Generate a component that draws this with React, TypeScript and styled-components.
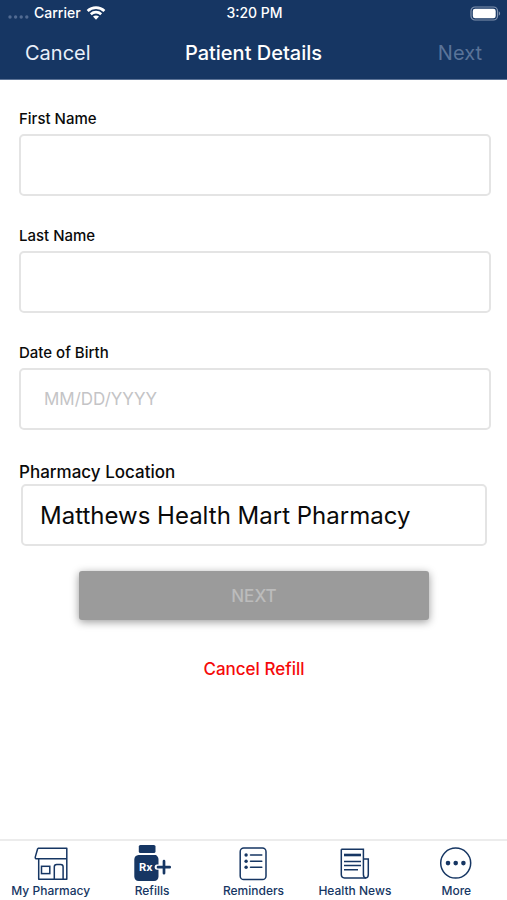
import React from "react";
import styled, { createGlobalStyle } from "styled-components";

const navy = "#163663";

const GlobalStyle = createGlobalStyle`
  *, *::before, *::after { box-sizing: border-box; }
  body {
    margin: 0;
    background: #fff;
    color: #0a0a0a;
    font-family: Inter, "Liberation Sans", sans-serif;
  }
  button, input { font-family: inherit; }
`;

const Screen = styled.div`
  display: flex;
  flex-direction: column;
  min-height: 100vh;
`;

const Header = styled.header`
  background: ${navy};
  color: #fff;
  border-bottom: 1px solid #5c7396;
`;

const StatusBar = styled.div`
  display: grid;
  grid-template-columns: 1fr auto 1fr;
  align-items: center;
  height: 26px;
  padding: 0 6px 0 8px;
  font-size: 14px;
  line-height: 20px;
  font-weight: 500;
`;

const Carrier = styled.div`
  display: flex;
  align-items: center;
  gap: 5px;
`;

const BatterySlot = styled.div`
  display: flex;
  justify-content: flex-end;
`;

const NavBar = styled.nav`
  display: grid;
  grid-template-columns: 1fr auto 1fr;
  align-items: center;
  height: 53px;
  padding: 0 25px;
`;

const Title = styled.h1`
  margin: 0;
  font-size: 20px;
  line-height: 24px;
  font-weight: 500;
`;

const NavButton = styled.button<{ $end?: boolean }>`
  justify-self: ${(p) => (p.$end ? "end" : "start")};
  padding: 0;
  border: 0;
  background: none;
  color: #e9f0fa;
  font-size: 20px;
  line-height: 24px;
  &:disabled { color: #5a7398; }
`;

const Form = styled.form`
  flex: 1;
  display: flex;
  flex-direction: column;
  padding: 29px 16px 24px 19px;
`;

const Field = styled.div`
  display: flex;
  flex-direction: column;
  gap: 5px;
  margin-bottom: 30px;
`;

const LocationField = styled(Field)`
  gap: 2px;
  margin: 2px 0 25px;
`;

const Label = styled.label<{ $large?: boolean }>`
  font-size: ${(p) => (p.$large ? 17 : 15)}px;
  line-height: 20px;
  font-weight: 500;
`;

const TextInput = styled.input`
  width: 100%;
  height: 62px;
  padding: 0 23px;
  border: 2px solid #e4e4e4;
  border-radius: 5px;
  background: #fff;
  color: #0a0a0a;
  font-size: 17px;
  &::placeholder { color: #c4c4c6; opacity: 1; }
`;

const LocationFrame = styled.div`
  display: flex;
  padding: 0 4px 0 2px;
`;

const LocationInput = styled(TextInput)`
  padding: 0 17px;
  font-size: 24px;
`;

const Actions = styled.div`
  display: flex;
  flex-direction: column;
  align-items: center;
  gap: 37px;
  padding: 0 62px 0 60px;
`;

const SubmitButton = styled.button`
  width: 100%;
  height: 49px;
  border: 0;
  border-radius: 3px;
  background: #9b9b9b;
  box-shadow: 0 2px 8px rgba(0, 0, 0, 0.4);
  color: #bcbcbc;
  font-size: 17px;
  font-weight: 500;
`;

const CancelRefill = styled.button`
  padding: 0;
  border: 0;
  background: none;
  color: #f50a0a;
  font-size: 17px;
  line-height: 24px;
  font-weight: 500;
`;

const TabBar = styled.nav`
  display: grid;
  grid-template-columns: repeat(5, 1fr);
  height: 61px;
  border-top: 2px solid #ececec;
`;

const Tab = styled.a`
  display: flex;
  flex-direction: column;
  align-items: center;
  padding-top: 5px;
  color: ${navy};
  font-size: 12px;
  line-height: 14px;
  font-weight: 500;
  text-decoration: none;
  white-space: nowrap;
`;

const TabIcon = styled.svg`
  display: block;
  width: 40px;
  height: 38px;
  overflow: visible;
  fill: none;
  stroke: currentColor;
  stroke-width: 1.5;
`;

const RxText = styled.text`
  fill: #fff;
  stroke: none;
  font-size: 11px;
  font-weight: 700;
`;

const SignalIcon = () => (
  <svg width="21" height="14" viewBox="0 0 21 14" fill="#526b92" aria-hidden="true">
    {[2, 7.6, 13.2, 18.8].map((x) => (
      <circle key={x} cx={x} cy="11" r="1.7" />
    ))}
  </svg>
);

const WifiIcon = () => (
  <svg width="20" height="16" viewBox="0 0 20 16" fill="none" stroke="#fff" strokeWidth="2.7" aria-hidden="true">
    <path d="M1.6 5.9C6.3 1.4 13.7 1.4 18.4 5.9" />
    <path d="M4.8 9.2C7.8 6.5 12.2 6.5 15.2 9.2" />
    <path d="M10 14.7 7 11.5C8.7 10 11.3 10 13 11.5Z" fill="#fff" stroke="none" />
  </svg>
);

const BatteryIcon = () => (
  <svg width="31" height="15" viewBox="0 0 31 15" aria-hidden="true">
    <rect x="1" y="1" width="26.5" height="13" rx="4" fill="none" stroke="#8294b0" strokeWidth="1.2" />
    <rect x="2.8" y="2.8" width="22.9" height="9.4" rx="2.3" fill="#fff" />
    <path d="M28.8 5.3c1.8.8 1.8 3.6 0 4.4z" fill="#8294b0" />
  </svg>
);

const PharmacyIcon = () => (
  <TabIcon viewBox="0 0 40 38" aria-hidden="true">
    <path d="M6.8 2.3H35.8V33.3H32.1V20.8c0-1.5-.9-2.4-2.4-2.4h-4c-1.5 0-2.4.9-2.4 2.4V33.3H7.7V12.8" strokeLinejoin="round" />
    <path d="M6.8 2.3 4.3 10.9c-.3 1 .2 1.9 1.4 1.9H35.8M23.3 33.3H32.1" strokeLinejoin="round" />
    <rect x="10.5" y="20.3" width="8.3" height="7.3" />
  </TabIcon>
);

const RefillsIcon = () => (
  <TabIcon viewBox="0 0 40 38" aria-hidden="true">
    <rect x="6.8" y="-1" width="16.7" height="8" rx="1.6" fill="currentColor" stroke="none" />
    <path
      d="M6.5 9H23.8c1.7 1 2.7 2.6 2.7 4.4v5.2H25c-3.1 0-3.1 5.2 0 5.2H26.5V30.5c0 2.7-1.7 4.5-4.4 4.5H6.7C4 35 2.3 33.2 2.3 30.5V13.4c0-2.2 1.8-4.4 4.2-4.4Z"
      fill="currentColor"
      stroke="none"
    />
    <path d="M26 21.2H37.7M32 15.2V27.2" strokeWidth="2.7" strokeLinecap="round" />
    <RxText x="7" y="25">Rx</RxText>
  </TabIcon>
);

const RemindersIcon = () => (
  <TabIcon viewBox="0 0 40 38" aria-hidden="true">
    <rect x="7.2" y="2.1" width="25.8" height="31.4" rx="3.6" />
    <path d="M17.5 9H28.8M17.5 15.2H28.8M17.5 21.3H28.8" strokeLinecap="round" />
    {[9, 15.2, 21.3].map((y) => (
      <circle key={y} cx="13.1" cy={y} r="1.7" fill="currentColor" stroke="none" />
    ))}
  </TabIcon>
);

const NewsIcon = () => (
  <TabIcon viewBox="0 0 40 38" aria-hidden="true">
    <path d="M6.3 3.3H28.4V28.6c0 2.2 1 3.3 2.5 3.3s2.4-1.1 2.4-3.3V13.1H28.4" />
    <path d="M6.3 3.3V28.6c0 2 1.2 3.3 3.2 3.3H30.9" />
    <path d="M9 9H26" strokeWidth="2.6" />
    <path d="M9 15.4H26M9 19.6H26M9 23.7H23" />
  </TabIcon>
);

const MoreIcon = () => (
  <TabIcon viewBox="0 0 40 38" aria-hidden="true">
    <circle cx="19.7" cy="17.1" r="15" />
    {[12, 19.7, 27.4].map((x) => (
      <circle key={x} cx={x} cy="17.1" r="2.3" fill="currentColor" stroke="none" />
    ))}
  </TabIcon>
);

const tabs = [
  { label: "My Pharmacy", Icon: PharmacyIcon },
  { label: "Refills", Icon: RefillsIcon },
  { label: "Reminders", Icon: RemindersIcon },
  { label: "Health News", Icon: NewsIcon },
  { label: "More", Icon: MoreIcon },
];

const fields = [
  { id: "first-name", label: "First Name" },
  { id: "last-name", label: "Last Name" },
  { id: "birth-date", label: "Date of Birth", placeholder: "MM/DD/YYYY" },
];

export default function App() {
  return (
    <Screen>
      <GlobalStyle />
      <Header>
        <StatusBar>
          <Carrier>
            <SignalIcon />
            <span>Carrier</span>
            <WifiIcon />
          </Carrier>
          <span>3:20 PM</span>
          <BatterySlot>
            <BatteryIcon />
          </BatterySlot>
        </StatusBar>
        <NavBar>
          <NavButton type="button">Cancel</NavButton>
          <Title>Patient Details</Title>
          <NavButton type="button" $end disabled>Next</NavButton>
        </NavBar>
      </Header>
      <Form>
        {fields.map((f) => (
          <Field key={f.id}>
            <Label htmlFor={f.id}>{f.label}</Label>
            <TextInput id={f.id} type="text" placeholder={f.placeholder} />
          </Field>
        ))}
        <LocationField>
          <Label htmlFor="location" $large>Pharmacy Location</Label>
          <LocationFrame>
            <LocationInput id="location" type="text" readOnly value="Matthews Health Mart Pharmacy" />
          </LocationFrame>
        </LocationField>
        <Actions>
          <SubmitButton type="submit" disabled>NEXT</SubmitButton>
          <CancelRefill type="button">Cancel Refill</CancelRefill>
        </Actions>
      </Form>
      <TabBar>
        {tabs.map(({ label, Icon }) => (
          <Tab key={label} href="#">
            <Icon />
            {label}
          </Tab>
        ))}
      </TabBar>
    </Screen>
  );
}
